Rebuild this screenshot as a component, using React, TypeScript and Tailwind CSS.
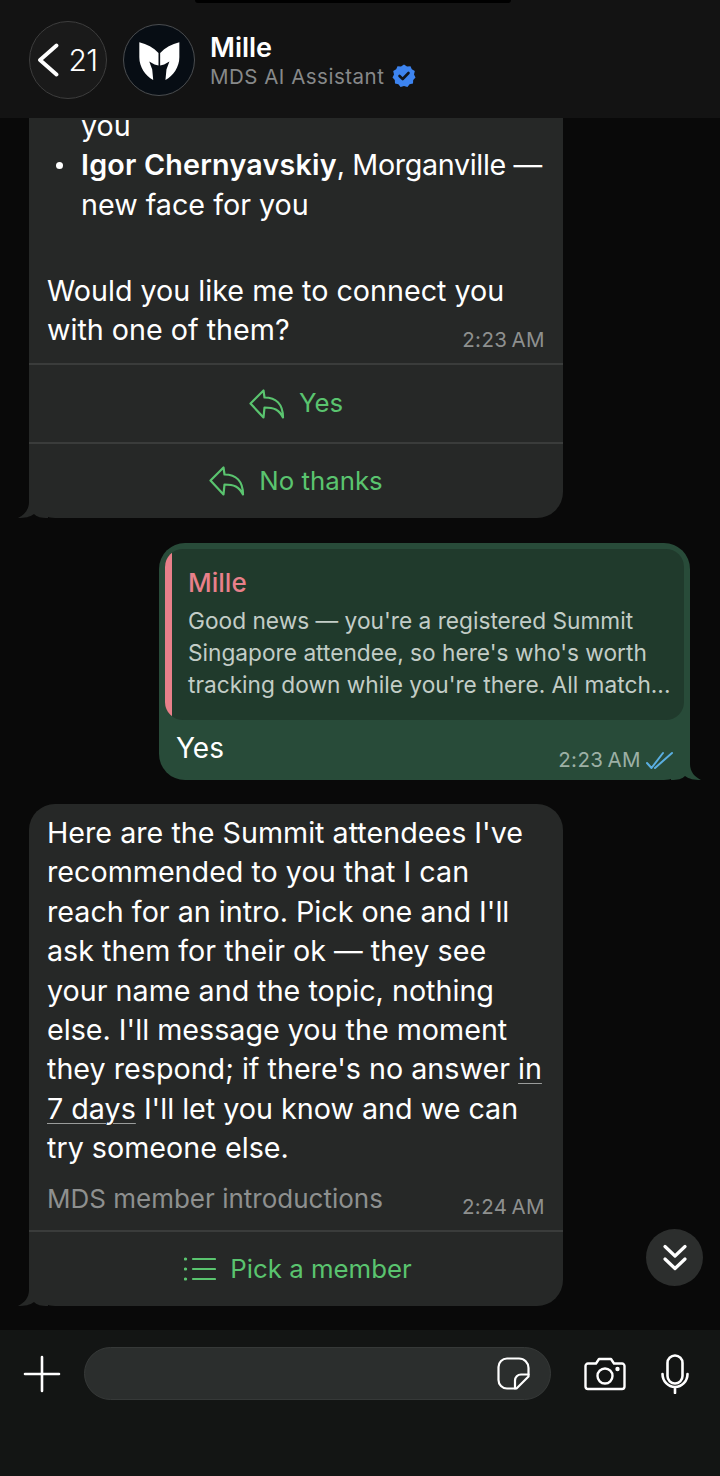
const TEXT = "font-['Inter',sans-serif]";

function ReplyIcon() {
  return (
    <svg width="36" height="30" viewBox="0 0 36 30" fill="none" stroke="#5ac46f" strokeWidth="2.200" strokeLinejoin="round" strokeLinecap="round">
      <path d="M1.500 14.500 14.500 1.500 15.500 8.500C27 8.500 34 15 34 28.500 30 20.500 25 18.500 15.500 18.500L14.500 28.500Z" />
    </svg>
  );
}

function ActionRow({ label, icon, last }: { label: string; icon: React.ReactNode; last?: boolean }) {
  return (
    <div
      className={
        last
          ? "flex h-[76px] items-center justify-center gap-[14px] border-t-2 border-[#3a3c3b] text-[25.8px] text-[#5ac46f]"
          : "flex h-[79px] items-center justify-center gap-[14px] border-t-2 border-[#3a3c3b] text-[25.8px] text-[#5ac46f]"
      }
    >
      {icon}
      <span>{label}</span>
    </div>
  );
}

function Tail({ side, color }: { side: "left" | "right"; color: string }) {
  if (side === "left") {
    return (
      <svg className="absolute bottom-0 left-[-11px]" width="30" height="30" viewBox="0 0 30 30">
        <path d="M11 0V14C11 22 6 27 0 30C7 30 12 29 16 26C19 29 23 30 30 30V0Z" fill={color} />
      </svg>
    );
  }
  return (
    <svg className="absolute bottom-0 right-[-11px]" width="30" height="30" viewBox="0 0 30 30">
      <path d="M19 0V14C19 22 24 27 30 30C23 30 18 29 14 26C11 29 7 30 0 30V0Z" fill={color} />
    </svg>
  );
}

function Time({ value }: { value: string }) {
  return <span className="mb-[-3px] text-[20.5px] leading-[24px] tracking-[0.4px] text-[#8e908f] [word-spacing:-2px]">{value}</span>;
}

export default function App() {
  return (
    <div className={`relative flex h-[1476px] w-[720px] flex-col overflow-hidden bg-[#090909] text-white ${TEXT}`}>
      {/* Header */}
      <div className="relative flex h-[118px] shrink-0 items-center bg-[#131313] pl-[29px] pt-[2px]">
        <div className="absolute left-[195px] top-0 h-[3px] w-[316px] rounded-b-full bg-black" />
        <div className="flex h-[78px] w-[78px] items-center justify-center gap-[9px] rounded-full border border-[#3d3d3d] bg-[#1a1a1a] pr-[1px]">
          <svg width="22" height="34" viewBox="0 0 22 34" fill="none" stroke="white" strokeWidth="3.800" strokeLinecap="round" strokeLinejoin="round">
            <path d="M19.500 2.500 3 17l16.500 14.500" />
          </svg>
          <span className="text-[30px] font-[350] leading-none tracking-[-0.5px]">21</span>
        </div>
        <div className="ml-[16px] flex h-[72px] w-[72px] items-center justify-center rounded-full border border-[#4a4d50] bg-[#070d14]">
          <svg width="45" height="43" viewBox="50 60 136 130" fill="white">
            <path d="M57 70C80 76 100 86 115 102L115 140 103 137 87 128 96 152 99 184C75 170 57 145 57 115Z" />
            <path d="M178 70C155 76 135 86 120 102L120 140 132 137 148 128 139 152 136 184C160 170 178 145 178 115Z" />
          </svg>
        </div>
        <div className="ml-[15px] mt-[1px] flex flex-col">
          <span className="text-[27px] font-semibold leading-[32px]">Mille</span>
          <div className="-mt-[1px] flex items-center gap-[8px]">
            <span className="text-[20.5px] leading-[27px] tracking-[0.5px] text-[#87898a]">MDS AI Assistant</span>
            <svg width="24" height="24" viewBox="0 0 24 24">
              <path
                fill="#3d84f0"
                d="M12 0.500 15 2.500 18.500 2.200 19.800 5.300 22.800 7 22 10.400 23.500 13.500 21.200 16 21 19.500 17.600 20.200 15.400 23 12 22 8.600 23 6.400 20.200 3 19.500 2.800 16 0.500 13.500 2 10.400 1.200 7 4.200 5.300 5.500 2.200 9 2.500Z"
              />
              <path d="M7.500 12 10.700 15 16.500 9" fill="none" stroke="#10151d" strokeWidth="2.600" strokeLinecap="round" strokeLinejoin="round" />
            </svg>
          </div>
        </div>
      </div>

      {/* Messages */}
      <div className="relative min-h-0 flex-1 overflow-hidden">
        <div className="-mt-[12px] flex flex-col gap-[24px]">
          {/* Clipped incoming bubble */}
          <div className="relative mb-[1px] ml-[29px] w-[534px] rounded-b-[26px] bg-[#262827]">
            <Tail side="left" color="#262827" />
            <div className="relative whitespace-nowrap px-[18px] text-[28.7px] leading-[39.4px]">
              <div className="relative pl-[34px]">you</div>
              <div className="relative pl-[34px]">
                <span className="absolute left-[9px] top-[17px] h-[7px] w-[7px] rounded-full bg-white" />
                <span className="font-semibold tracking-[0.2px]">Igor Chernyavskiy</span>
                <span className="tracking-[-0.35px]">, Morganville —</span>
                <br />
                new face for you
              </div>
              <div className="h-[39.4px]" />
              <div className="mt-[7px]">Would you like me to connect you</div>
              <div className="flex items-end justify-between pb-[13.6px]">
                <span>with one of them?</span>
                <Time value="2:23 AM" />
              </div>
            </div>
            <div className="relative">
              <ActionRow label="Yes" icon={<ReplyIcon />} />
              <ActionRow label="No thanks" icon={<ReplyIcon />} last />
            </div>
          </div>

          {/* Outgoing reply */}
          <div className="relative ml-[159px] w-[531px] rounded-[26px] bg-[#284b39] p-[6px] pb-0">
            <Tail side="right" color="#284b39" />
            <div className="relative flex h-[171px] overflow-hidden rounded-[18px] bg-[#203a2c]">
              <div className="w-[7px] shrink-0 bg-[#e8808a]" />
              <div className="pl-[16px] pt-[18px]">
                <div className="text-[26px] font-medium leading-[32px] text-[#e8808a]">Mille</div>
                <div className="mt-[6px] whitespace-nowrap text-[22.7px] leading-[32px] text-[#c3cdc7]">
                  Good news — you're a registered Summit
                  <br />
                  Singapore attendee, so here's who's worth
                  <br />
                  tracking down while you're there. All match...
                </div>
              </div>
            </div>
            <div className="relative flex h-[60px] items-start justify-between pl-[11px] pr-[11px] pt-[9px]">
              <span className="text-[28px] leading-[39px]">Yes</span>
              <div className="flex items-center gap-[5px] pt-[19px]">
                <span className="text-[20.5px] leading-[24px] tracking-[0.4px] text-[#9db0a5] [word-spacing:-2px]">2:23 AM</span>
                <svg width="27" height="19" viewBox="0 0 27 19" fill="none" stroke="#5aaee0" strokeWidth="2" strokeLinecap="round" strokeLinejoin="round">
                  <path d="M1 12 5.500 17 17 2" />
                  <path d="M9 17 26 2" />
                </svg>
              </div>
            </div>
          </div>

          {/* Incoming intro message */}
          <div className="relative ml-[29px] w-[534px] rounded-[26px] bg-[#262827]">
            <Tail side="left" color="#262827" />
            <div className="relative whitespace-nowrap px-[18px] pt-[9px] text-[28.7px] leading-[39.4px]">
              Here are the Summit attendees I've
              <br />
              recommended to you that I can
              <br />
              reach for an intro. Pick one and I'll
              <br />
              ask them for their ok — they see
              <br />
              your name and the topic, nothing
              <br />
              else. I'll message you the moment
              <br />
              they respond; if there's no answer{" "}
              <span className="underline decoration-[#9a9c9b] decoration-1 underline-offset-[4px]">in</span>
              <br />
              <span className="underline decoration-[#9a9c9b] decoration-1 underline-offset-[4px]">7 days</span> I'll let you know and we can
              <br />
              try someone else.
              <div className="mt-[14px] flex items-end justify-between pb-[14.4px]">
                <span className="text-[26px] leading-[34px] text-[#8e908f]">MDS member introductions</span>
                <Time value="2:24 AM" />
              </div>
            </div>
            <div className="relative">
              <ActionRow
                last
                label="Pick a member"
                icon={
                  <svg className="ml-[4px]" width="32" height="24" viewBox="0 0 32 24" fill="none" stroke="#5ac46f" strokeWidth="2.200" strokeLinecap="round">
                    <path d="M9 2h22M9 12h22M9 22h22" />
                    <path d="M1.500 2h.1M1.500 12h.1M1.500 22h.1" strokeWidth="3.200" />
                  </svg>
                }
              />
            </div>
          </div>
        </div>

        <div className="absolute left-[646px] top-[1111px] flex h-[57px] w-[57px] items-center justify-center rounded-full bg-[#2c2e2d]">
          <svg width="24" height="28" viewBox="0 0 24 28" fill="none" stroke="white" strokeWidth="3.200" strokeLinecap="round" strokeLinejoin="round">
            <path d="M2 2.500 12 12 22 2.500" />
            <path d="M2 15 12 24.500 22 15" />
          </svg>
        </div>
      </div>

      {/* Composer */}
      <div className="flex h-[146px] shrink-0 items-start bg-[#131514] pt-[17px]">
        <div className="flex h-[53px] w-[84px] items-center justify-center">
          <svg width="38" height="38" viewBox="0 0 38 38" fill="none" stroke="white" strokeWidth="2.600" strokeLinecap="round">
            <path d="M19 2v34M2 19h34" />
          </svg>
        </div>
        <div className="flex h-[53px] w-[467px] items-center justify-end rounded-full border border-[#363938] bg-[#2b2e2d] pr-[20px]">
          <svg width="33" height="33" viewBox="0 0 33 33" fill="none" stroke="white" strokeWidth="2.200" strokeLinecap="round" strokeLinejoin="round">
            <path d="M10 1.500h12a9.500 9.500 0 0 1 9.500 9.500v8.500L19.500 31.500H10A8.500 8.500 0 0 1 1.500 23V10A8.500 8.500 0 0 1 10 1.500Z" />
            <path d="M31.500 17.500H24a6 6 0 0 0-6 6v8" />
          </svg>
        </div>
        <div className="ml-[33px] flex h-[53px] w-[42px] items-center justify-center">
          <svg width="42" height="34" viewBox="0 0 42 34" fill="none" stroke="white" strokeWidth="2.400" strokeLinejoin="round">
            <path d="M4 6.500h8L15 2h12l3 4.500h8a2.500 2.500 0 0 1 2.500 2.500v20.500A2.500 2.500 0 0 1 38 32H4a2.500 2.500 0 0 1-2.500-2.500V9A2.500 2.500 0 0 1 4 6.500Z" />
            <circle cx="21" cy="19" r="7.500" />
            <circle cx="33.500" cy="12" r="1" fill="white" />
          </svg>
        </div>
        <div className="ml-[35px] flex h-[53px] w-[28px] items-center justify-center">
          <svg width="28" height="40" viewBox="0 0 28 40" fill="none" stroke="white" strokeWidth="2.600" strokeLinecap="round">
            <rect x="6.500" y="1.500" width="15" height="28" rx="7.500" />
            <path d="M1.500 20a12.500 13 0 0 0 25 0M14 33v6" />
          </svg>
        </div>
      </div>
    </div>
  );
}
